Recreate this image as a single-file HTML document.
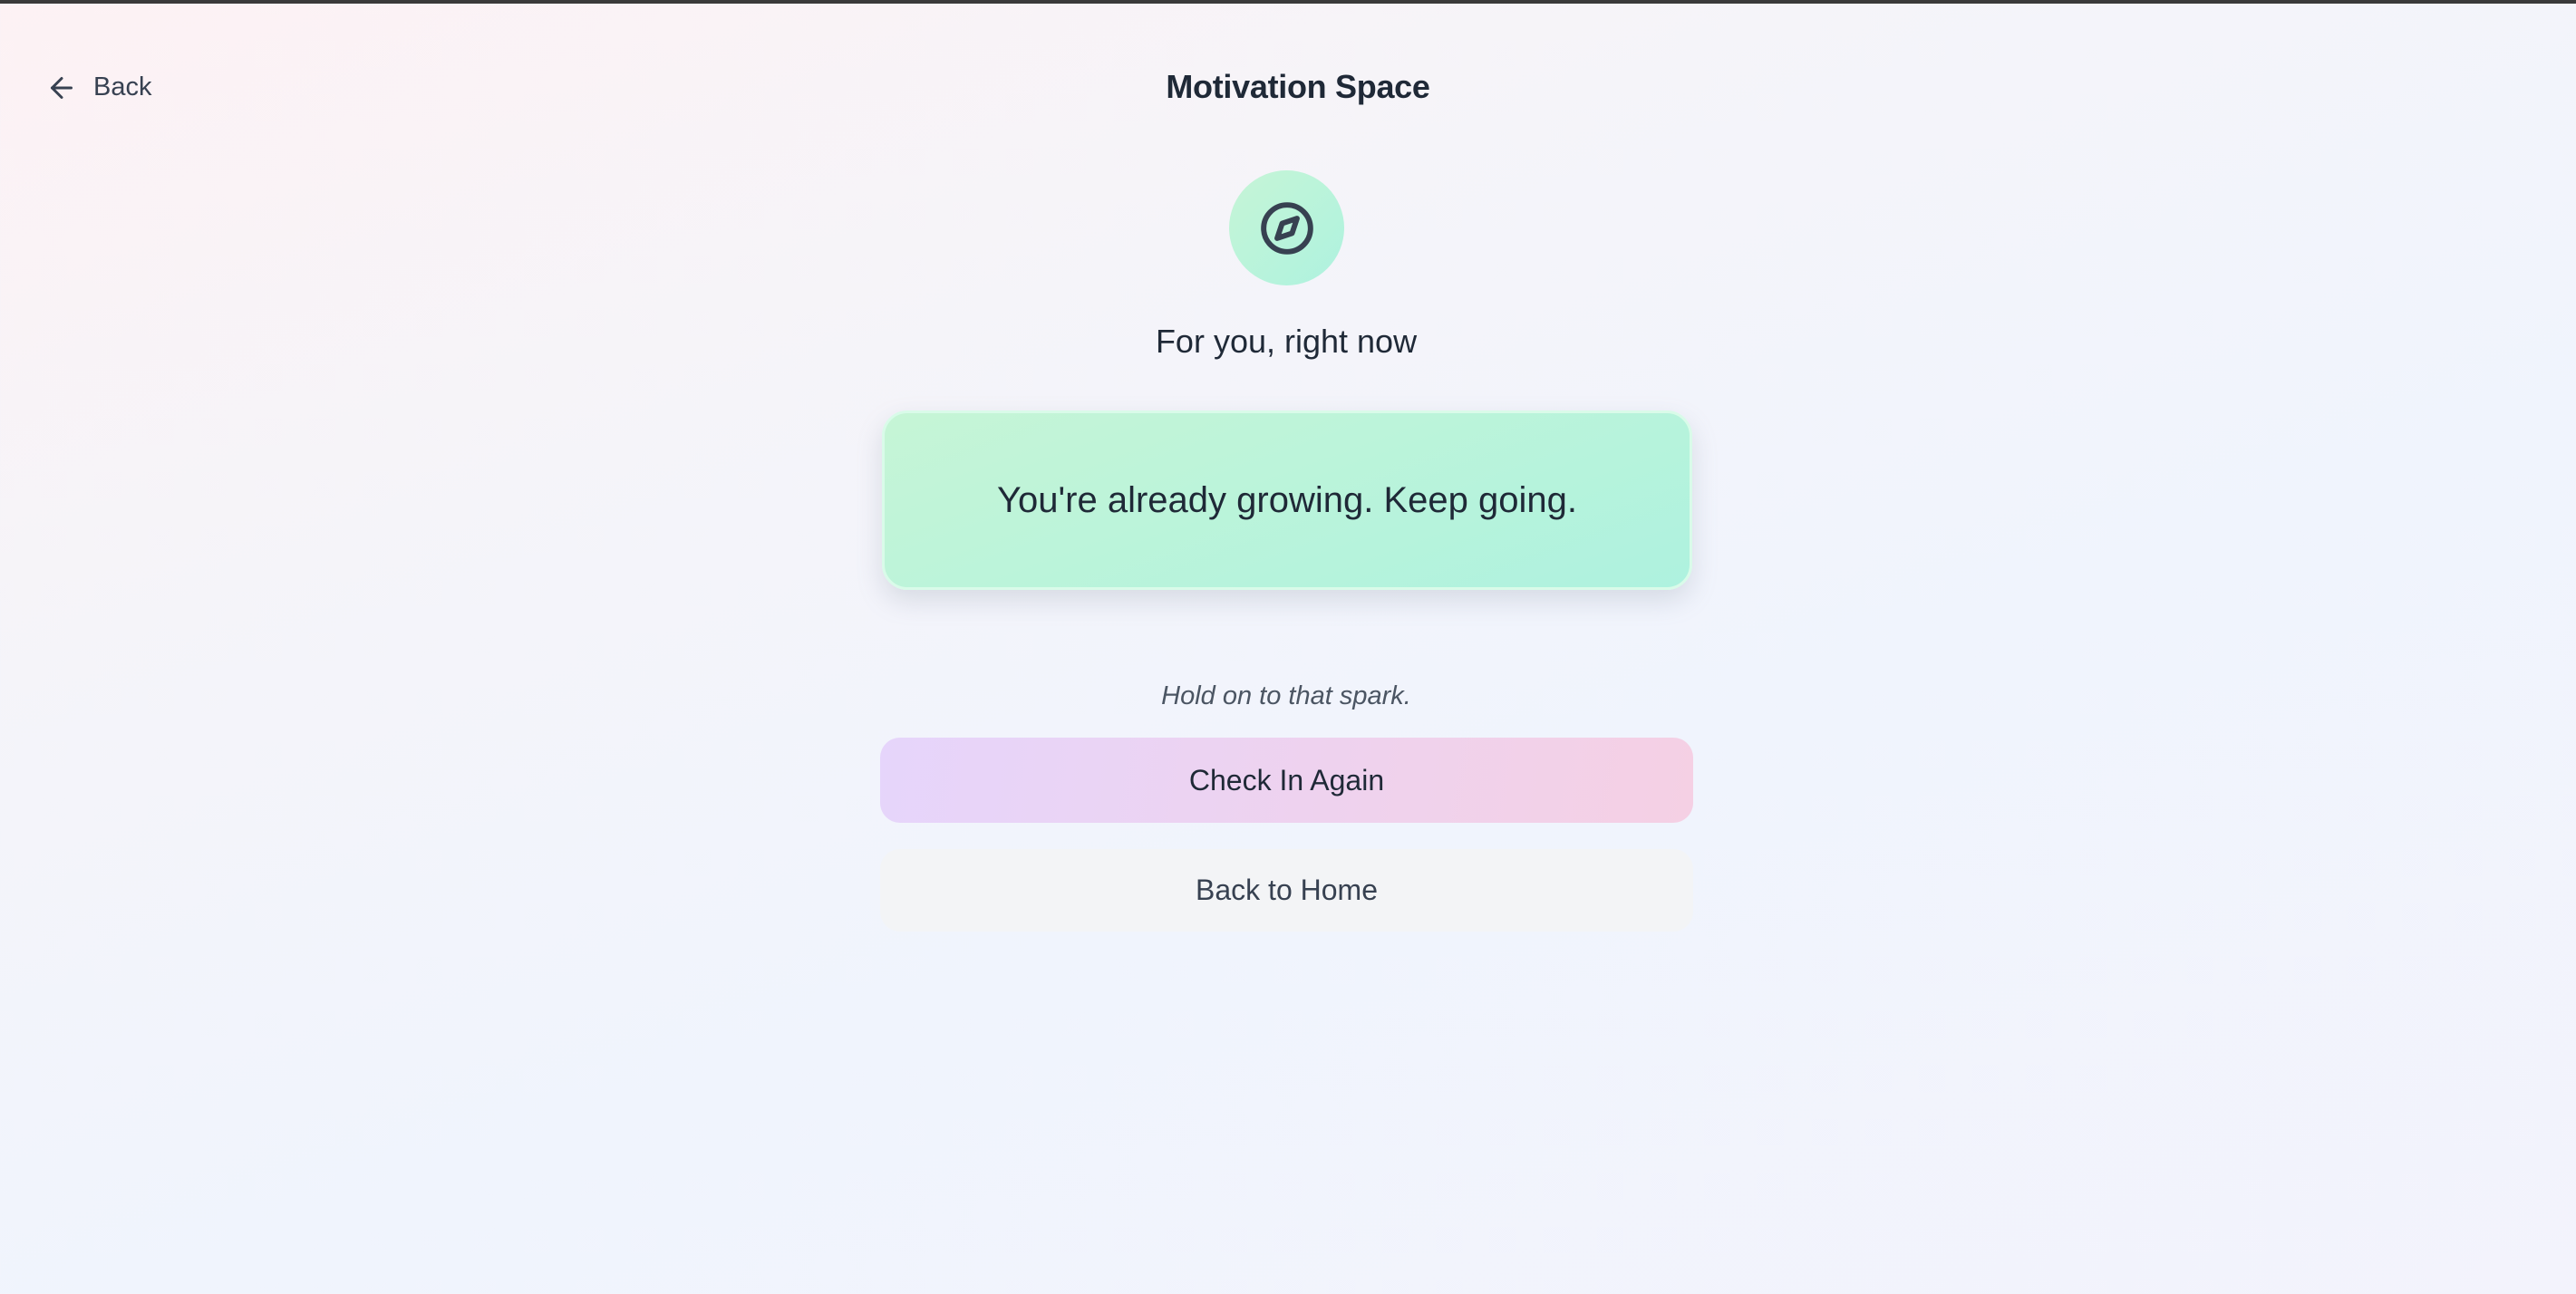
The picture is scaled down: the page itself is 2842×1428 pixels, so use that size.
<!DOCTYPE html>
<html><head><meta charset="utf-8"><style>
html,body{margin:0;padding:0;width:2842px;height:1428px;overflow:hidden}
body{font-family:"Liberation Sans",sans-serif;color:#1f2937;position:relative;
background:linear-gradient(160deg,#fdf2f4 0%,#f5f4f9 30%,#f0f4fd 60%,#f3f3fc 100%);}
.topbar{position:absolute;left:0;top:0;width:100%;height:4px;background:#3a3a3a}
.abs{position:absolute}
.center{position:absolute;left:0;width:2838px;text-align:center}
</style></head><body>
<div class="topbar"></div>
<svg class="abs" style="left:50px;top:79px" width="36" height="36" viewBox="0 0 24 24" fill="none" stroke="#374151" stroke-width="2" stroke-linecap="round" stroke-linejoin="round"><path d="M19 12H5"/><path d="M12 19l-7-7 7-7"/></svg>
<div class="abs" style="left:103px;top:78px;font-size:29px;color:#374151;line-height:36px">Back</div>
<div class="center" style="top:74px;font-size:36px;font-weight:bold;line-height:44px;width:2864px;color:#1f2937;letter-spacing:-0.3px">Motivation Space</div>
<div class="abs" style="left:1356px;top:188px;width:127px;height:127px;border-radius:50%;background:linear-gradient(135deg,#c6f5d6,#aef2df)"></div>
<svg class="abs" style="left:1389px;top:221px" width="62" height="62" viewBox="0 0 24 24" fill="none" stroke="#374151" stroke-width="2.3" stroke-linecap="round" stroke-linejoin="round"><circle cx="12" cy="12" r="10"/><polygon points="16.24 7.76 14.12 14.12 7.76 16.24 9.88 9.88"/></svg>
<div class="center" style="top:354px;font-size:36px;line-height:46px;color:#1f2937">For you, right now</div>
<div class="abs" style="left:973px;top:453px;width:888px;height:192px;border:3px solid #d9fbe9;border-radius:28px;background:linear-gradient(160deg,#c6f5d6,#aef2df);box-shadow:0 12px 28px rgba(120,130,150,.22);display:flex;align-items:center;justify-content:center;font-size:40px;color:#1f2937;">You're already growing. Keep going.</div>
<div class="center" style="top:750px;font-size:29px;font-style:italic;color:#4b5563;line-height:36px">Hold on to that spark.</div>
<div class="abs" style="left:971px;top:814px;width:897px;height:94px;border-radius:22px;background:linear-gradient(100deg,#e6d5fb,#f5d0e4);display:flex;align-items:center;justify-content:center;font-size:32px;color:#1f2937">Check In Again</div>
<div class="abs" style="left:971px;top:937px;width:897px;height:91px;border-radius:22px;background:#f3f4f6;display:flex;align-items:center;justify-content:center;font-size:32px;color:#374151">Back to Home</div>
</body></html>
